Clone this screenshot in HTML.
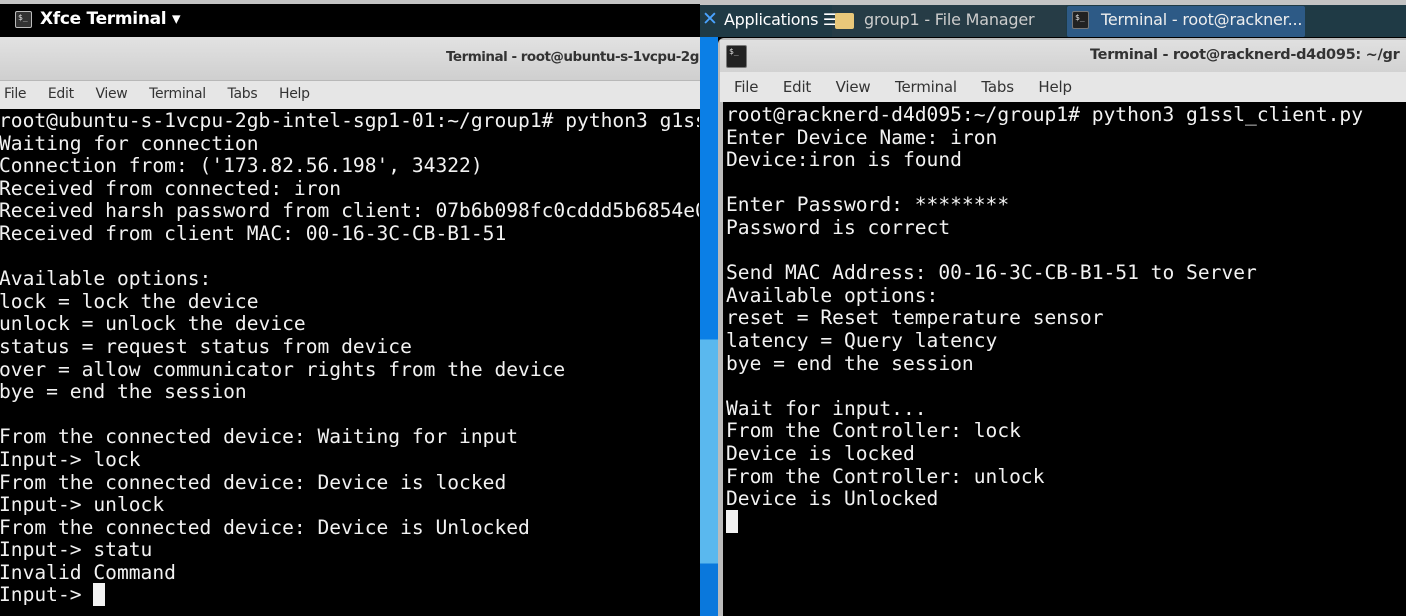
<!DOCTYPE html>
<html><head><meta charset="utf-8"><style>
*{margin:0;padding:0;box-sizing:border-box}
body{width:1406px;height:616px;overflow:hidden;position:relative;background:#000;font-family:"DejaVu Sans","Liberation Sans",sans-serif}
.abs{position:absolute}
pre{font-family:"DejaVu Sans Mono","Liberation Mono",monospace;font-size:19.6px;line-height:22.6px;color:#f2f2f2;white-space:pre}
.ico{position:absolute;background:#222;border:1px solid #777;border-radius:2px}
.ico:after{content:"$_";position:absolute;left:2px;top:1px;font-size:8px;color:#ddd;font-family:"DejaVu Sans Mono",monospace}
</style></head><body>
<!-- LEFT -->
<div class="abs" style="left:0;top:0;width:700px;height:4px;background:#c4c4c4"></div>
<div class="abs" style="left:0;top:4px;width:700px;height:33px;background:#000"></div>
<div class="ico" style="left:15px;top:11px;width:17px;height:17px;background:#333;border-color:#bbb"></div>
<div class="abs" style="left:40px;top:9px;color:#fff;font-size:17px;font-weight:bold;letter-spacing:-0.3px">Xfce Terminal ▾</div>
<div class="abs" style="left:0;top:37px;width:700px;height:44px;background:linear-gradient(#e2e2e2,#cfcfcf);border-bottom:1px solid #b8b8b8"></div>
<div class="abs" style="left:446px;top:49px;font-size:13.5px;font-weight:bold;color:#333;white-space:nowrap;width:254px;overflow:hidden;letter-spacing:-0.5px">Terminal - root@ubuntu-s-1vcpu-2gb</div>
<div class="abs" style="left:0;top:81px;width:700px;height:28px;background:#e6e6e6"></div>
<div class="abs" style="left:4px;top:86px;font-size:14px;color:#333;word-spacing:17.5px;letter-spacing:-0.3px;white-space:nowrap">File Edit View Terminal Tabs Help</div>
<pre class="abs" style="left:-1px;top:110px;width:700px;overflow:hidden">root@ubuntu-s-1vcpu-2gb-intel-sgp1-01:~/group1# python3 g1ssl_server.py
Waiting for connection
Connection from: ('173.82.56.198', 34322)
Received from connected: iron
Received harsh password from client: 07b6b098fc0cddd5b6854e0
Received from client MAC: 00-16-3C-CB-B1-51

Available options:
lock = lock the device
unlock = unlock the device
status = request status from device
over = allow communicator rights from the device
bye = end the session

From the connected device: Waiting for input
Input-> lock
From the connected device: Device is locked
Input-> unlock
From the connected device: Device is Unlocked
Input-> statu
Invalid Command
Input-> <span style="background:#f2f2f2">&nbsp;</span></pre>
<!-- RIGHT -->
<div class="abs" style="left:700px;top:0;width:706px;height:5px;background:#c4c4c4"></div>
<div class="abs" style="left:700px;top:5px;width:706px;height:32px;background:#1f3a45"></div>
<div class="abs" style="left:832px;top:5px;width:234px;height:32px;background:#263c46"></div>
<div class="abs" style="left:1067px;top:6px;width:238px;height:31px;background:#2d5a86;border-radius:2px"></div>
<div class="abs" style="left:702px;top:8px;color:#4aa3ff;font-size:19px;font-weight:bold">✕</div>
<div class="abs" style="left:724px;top:10px;color:#fff;font-size:16px;white-space:nowrap;letter-spacing:-0.3px">Applications ☰</div>
<div class="abs" style="left:835px;top:13px;width:19px;height:16px;background:#e9c87a;border-radius:2px"></div>
<div class="abs" style="left:864px;top:10px;color:#ccc;font-size:16px;letter-spacing:-0.2px">group1 - File Manager</div>
<div class="ico" style="left:1072px;top:11px;width:17px;height:18px"></div>
<div class="abs" style="left:1101px;top:10px;color:#eee;font-size:16px;letter-spacing:-0.2px">Terminal - root@rackner...</div>
<div class="abs" style="left:700px;top:37px;width:18px;height:579px;background:linear-gradient(#0b7fe6 0,#0b7fe6 302px,#5ab8ee 303px,#5ab8ee 526px,#0a78dc 527px)"></div>
<div class="abs" style="left:718px;top:38px;width:688px;height:578px;background:#bcbcbc;border-radius:6px 0 0 0"></div>
<div class="abs" style="left:720px;top:40px;width:686px;height:32px;background:linear-gradient(#e0e0e0,#d2d2d2)"></div>
<div class="ico" style="left:726px;top:45px;width:21px;height:23px"></div>
<div class="abs" style="left:1090px;top:47px;font-size:14.5px;font-weight:bold;color:#333;white-space:nowrap;letter-spacing:-0.3px">Terminal - root@racknerd-d4d095: ~/gr</div>
<div class="abs" style="left:720px;top:72px;width:686px;height:30px;background:#e6e6e6"></div>
<div class="abs" style="left:734px;top:78px;font-size:15px;color:#333;word-spacing:20px;letter-spacing:-0.2px;white-space:nowrap">File Edit View Terminal Tabs Help</div>
<div class="abs" style="left:723px;top:102px;width:683px;height:514px;background:#000"></div>
<pre class="abs" style="left:726px;top:104px">root@racknerd-d4d095:~/group1# python3 g1ssl_client.py
Enter Device Name: iron
Device:iron is found

Enter Password: ********
Password is correct

Send MAC Address: 00-16-3C-CB-B1-51 to Server
Available options:
reset = Reset temperature sensor
latency = Query latency
bye = end the session

Wait for input...
From the Controller: lock
Device is locked
From the Controller: unlock
Device is Unlocked
<span style="background:#f2f2f2">&nbsp;</span></pre>
</body></html>
